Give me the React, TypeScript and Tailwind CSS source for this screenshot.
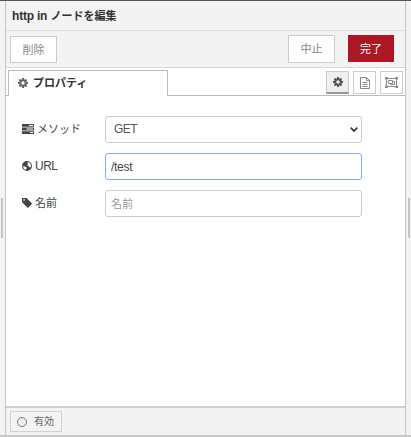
import React from "react";

const COG =
  "M1024 896q0-106-75-181t-181-75-181 75-75 181 75 181 181 75 181-75 75-181zm512-109v222q0 12-8 23t-20 13l-185 28q-19 54-39 91 35 50 107 138 10 12 10 25t-9 23q-27 37-99 108t-94 71q-12 0-26-9l-138-108q-44 23-91 38-16 136-29 186-7 28-36 28h-222q-14 0-24.5-8.5t-11.5-21.5l-28-184q-49-16-90-37l-141 107q-10 9-25 9-14 0-25-11-126-114-165-168-7-10-7-23 0-12 8-23 15-21 51-66.5t54-70.5q-27-50-41-99l-183-27q-13-2-21-12.5t-8-23.5v-222q0-12 8-23t19-13l186-28q14-46 39-92-40-57-107-138-10-12-10-24 0-10 9-23 26-36 98.5-107.5t94.5-71.5q13 0 26 10l138 107q44-23 91-38 16-136 29-186 7-28 36-28h222q14 0 24.5 8.5t11.5 21.5l28 184q49 16 90 37l142-107q9-9 24-9 13 0 25 10 129 119 165 170 7 8 7 22 0 12-8 23-15 21-51 66.5t-54 70.5q26 50 41 98l183 28q13 2 21 12.5t8 23.5z";
const TAG =
  "M448 448q0-53-37.5-90.5t-90.5-37.5-90.5 37.5-37.5 90.5 37.5 90.5 90.5 37.5 90.5-37.5 37.5-90.5zm1067 576q0 53-37 90l-491 492q-39 37-91 37-53 0-90-37l-715-716q-38-37-64.5-101t-26.5-117v-416q0-52 38-90t90-38h416q53 0 117 26.5t102 64.5l715 714q37 39 37 91z";

function Cog({ className }: { className: string }) {
  return (
    <svg viewBox="0 128 1536 1536" className={className} fill="currentColor">
      <path d={COG} />
    </svg>
  );
}

function Tasks() {
  return (
    <svg viewBox="0 0 12 10" className="h-[10px] w-[12px]" fill="currentColor">
      <path
        fillRule="evenodd"
        d="M0 0h12v2.8H0zM7 .9v1h4v-1zM0 3.6h12v2.8H0zM4.5 4.5v1H11v-1zM0 7.2h12V10H0zM8 8.1v1h3v-1z"
      />
    </svg>
  );
}

function Globe() {
  return (
    <svg viewBox="0 0 12 12" className="size-[10px]">
      <circle cx="6" cy="6" r="5.9" fill="#444" />
      <path
        fill="#fff"
        d="M6.6 1.2 8 1.5l1.6 1.3 1.1 1.8.1 1.6-1.1 1.5-1.3-.5-.5-1.4-1.5-.5.1-1.5 1.1-.8-.9-.5zM1.4 5.6l1.7.9 1.6.4 1.2 1.2-.5 1.2-.9.6-.5 1-1.4-1.2-.9-1.8z"
      />
    </svg>
  );
}

function FileText() {
  return (
    <svg viewBox="0 0 10 12" className="h-[12px] w-[10px]" fill="none" stroke="currentColor">
      <path d="M.5.5h6l3 3v8h-9zM6.5.5v3h3M2.5 5.5h5M2.5 7.5h5M2.5 9.5h5" />
    </svg>
  );
}

function ObjectGroup() {
  return (
    <svg viewBox="0 0 13 11" className="h-[11px] w-[13px]" fill="none" stroke="currentColor">
      <path d="M2.5 1.5h8M2.5 9.5h8M1.5 2.5v6M11.5 2.5v6M3.5 3.5h4v3h-4zM7.5 4.5h2v3h-4v-1" />
      <path fill="currentColor" stroke="none" d="M0 0h2.6v2.4H0zM10.4 0H13v2.4h-2.6zM0 8.6h2.6V11H0zM10.4 8.6H13V11h-2.6z" />
    </svg>
  );
}

function Row({ icon, label, children }: { icon: React.ReactNode; label: React.ReactNode; children: React.ReactNode }) {
  return (
    <div className="flex h-7 items-center">
      <div className="flex w-[83px] items-center gap-[3px] text-[#444]">
        {icon}
        <span className="whitespace-nowrap">{label}</span>
      </div>
      {children}
    </div>
  );
}

export default function App() {
  return (
    <div className="flex h-[437px] w-[411px] flex-col overflow-hidden border-t border-[#59565a] bg-[#f3f3f3] font-['Liberation_Sans','Noto_Sans_CJK_JP',sans-serif] text-[11px] leading-[18px] text-[#444]">
      <div className="flex h-[434px]">
        <div className="flex w-[5px] items-center">
          <div className="ml-px h-10 w-[2px] bg-[#c4c4c4]" />
        </div>
        <div className="flex w-[401px] flex-col border-x border-[#c4c4c4]">
          <header className="flex h-[30px] items-center border-b border-[#dedede] pl-[6px] font-bold text-[#333]">
            <span className="whitespace-pre text-[12px] tracking-[-0.2px]">http in </span>
            <span>ノードを編集</span>
          </header>
          <div className="flex h-[37px] items-center border-b border-[#d8d8d8] pr-[11px] pl-1 text-[#888]">
            <button className="mt-px h-[27px] w-[47px] border border-[#ccc] bg-white">削除</button>
            <button className="mb-px ml-auto h-[28px] w-[47px] border border-[#ccc] bg-white">中止</button>
            <button className="mb-px ml-[13px] h-[27px] w-[46px] bg-[#ad1625] text-white">完了</button>
          </div>
          <div className="flex h-[28px] bg-white">
            <div className="w-[2px] border-b border-[#bbb]" />
            <div className="mt-[2px] flex w-[160px] items-center gap-[5px] border-x border-t border-[#bbb] pb-px pl-[9px] font-bold text-[#333]">
              <Cog className="size-[10px] text-[#666]" />
              プロパティ
            </div>
            <div className="flex flex-1 items-start justify-end gap-1 border-b border-[#bbb] pt-[3px] pr-[2px] text-[#888]">
              <button className="flex h-[23px] w-[23px] items-center justify-center border border-b-2 border-[#ccc] border-b-[#999] bg-[#efefef]">
                <Cog className="size-[10px] text-[#555]" />
              </button>
              <button className="flex h-[23px] w-[23px] items-center justify-center border border-[#ccc] bg-white">
                <FileText />
              </button>
              <button className="flex h-[23px] w-[23px] items-center justify-center border border-[#ccc] bg-white">
                <ObjectGroup />
              </button>
            </div>
          </div>
          <main className="flex flex-1 flex-col gap-[9px] bg-white pt-[19px] pl-[16px]">
            <Row icon={<Tasks />} label="メソッド">
              <div className="flex h-[27px] w-[257px] items-center justify-between rounded-[3px] border border-[#ccc] pr-[3px] pl-2 text-[12px] tracking-[-0.6px] text-[#555]">
                GET
                <svg viewBox="0 0 8 5" className="h-[5px] w-[8px]" fill="none" stroke="#333" strokeWidth="1.7">
                  <path d="M.7.7 4 4 7.3.7" />
                </svg>
              </div>
            </Row>
            <Row icon={<Globe />} label={<span className="text-[12px] tracking-[-0.5px]">URL</span>}>
              <div className="flex h-[27px] w-[257px] rounded-[3px] border border-[#7fb0f5] bg-white pt-px pl-[5px]">
                <input
                  className="w-full bg-transparent text-[12px] tracking-[-0.3px] text-[#444] outline-none"
                  defaultValue="/test"
                />
              </div>
            </Row>
            <Row
              icon={
                <svg viewBox="0 192 1536 1472" className="size-[10px]" fill="currentColor">
                  <path d={TAG} />
                </svg>
              }
              label="名前"
            >
              <input
                className="h-[27px] w-[257px] rounded-[3px] border border-[#ccc] pt-px pl-[5px] outline-none placeholder:text-[#999]"
                placeholder="名前"
              />
            </Row>
          </main>
          <footer className="flex h-[29px] items-center border-t-2 border-[#d0d0d0] pl-1">
            <button className="flex h-[21px] w-[52px] items-center gap-[7px] border border-[#d2d2d2] pl-[6px] text-[10px] text-[#666]">
              <span className="size-[10px] rounded-full border border-[#777]" />
              有効
            </button>
          </footer>
        </div>
        <div className="flex w-[5px] items-center pl-[2px]">
          <div className="h-10 w-[2px] bg-[#c4c4c4]" />
        </div>
      </div>
      <div className="h-[2px] bg-[#c8c8c8]" />
    </div>
  );
}
